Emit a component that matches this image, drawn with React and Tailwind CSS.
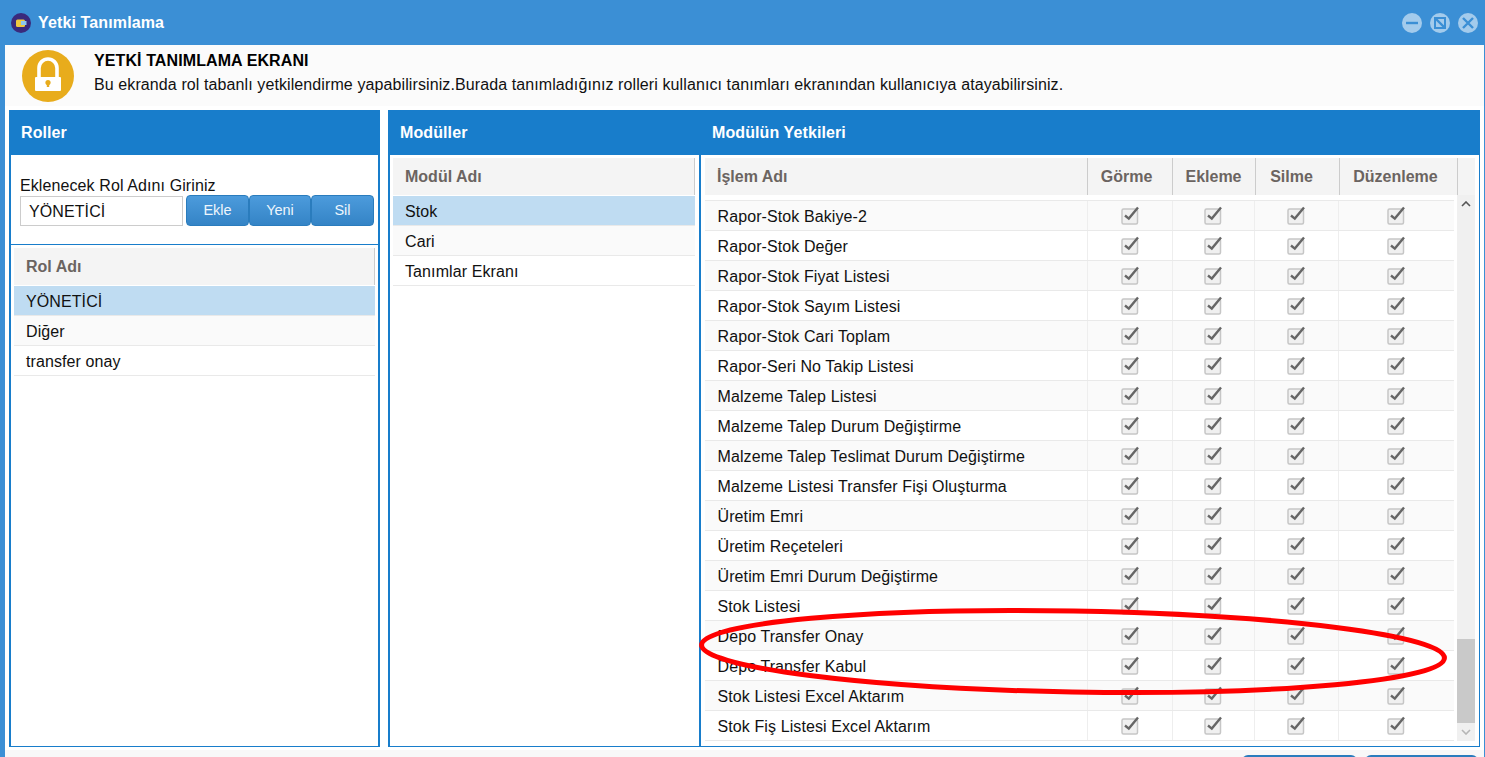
const permissions = [
  "Rapor-Stok Bakiye-2",
  "Rapor-Stok Değer",
  "Rapor-Stok Fiyat Listesi",
  "Rapor-Stok Sayım Listesi",
  "Rapor-Stok Cari Toplam",
  "Rapor-Seri No Takip Listesi",
  "Malzeme Talep Listesi",
  "Malzeme Talep Durum Değiştirme",
  "Malzeme Talep Teslimat Durum Değiştirme",
  "Malzeme Listesi Transfer Fişi Oluşturma",
  "Üretim Emri",
  "Üretim Reçeteleri",
  "Üretim Emri Durum Değiştirme",
  "Stok Listesi",
  "Depo Transfer Onay",
  "Depo Transfer Kabul",
  "Stok Listesi Excel Aktarım",
  "Stok Fiş Listesi Excel Aktarım",
];

const CheckBox = () => (
  <svg width="19" height="19" viewBox="0 0 19 19" className="block">
    <rect x="1" y="3" width="15.5" height="15" rx="1.5" fill="#f0f0f0" stroke="#c6c6c6" strokeWidth="1.5" />
    <path d="M4 9.5 L7.8 12.6 L17 1.5" fill="none" stroke="#666" strokeWidth="2.4" />
  </svg>
);

const WindowButton = ({ children }) => (
  <div className="flex h-5 w-5 items-center justify-center rounded-full bg-[#a3cbec]">
    <svg width="14" height="14" viewBox="0 0 14 14" fill="none" stroke="#3b8fd5" strokeWidth="2.4">
      {children}
    </svg>
  </div>
);

const PanelTitle = ({ children, className }) => (
  <div className={`flex h-[45px] shrink-0 items-center bg-[#187dcb] pl-3 text-[16px] font-bold tracking-[0.1px] text-white ${className}`}>
    {children}
  </div>
);

const HeadCell = ({ children, className }) => (
  <div className={`flex h-[37px] items-center bg-[#f4f4f4] text-[16px] font-bold text-[#6b6461] ${className}`}>
    {children}
  </div>
);

const ListRow = ({ label, selected, odd }) => (
  <div
    className={`flex h-[30px] items-center border-b border-[#e9e9e9] pl-3 pt-[2px] text-[16px] tracking-[0.1px] text-[#111] ${
      selected ? "bg-[#bfdcf2]" : odd ? "bg-[#fafafa]" : "bg-white"
    }`}
  >
    {label}
  </div>
);

const ActionButton = ({ children, className }) => (
  <button className={`h-[31px] rounded-[4px] border border-[#2a7cbd] bg-gradient-to-b from-[#4c9bdc] to-[#3484c6] text-[14.5px] text-[#eef6fc] ${className}`}>
    {children}
  </button>
);

export default function App() {
  return (
    <div className="relative flex h-[757px] w-[1485px] flex-col overflow-hidden bg-[#3b8fd5] font-['Liberation_Sans',Arial,sans-serif]">
      {/* title bar */}
      <div className="flex h-[45px] shrink-0 items-center justify-between pl-[11px] pr-[7px]">
        <div className="flex items-center gap-[7px]">
          <svg width="20" height="20" viewBox="0 0 20 20">
            <circle cx="10" cy="10" r="10" fill="#3a2a7c" />
            <rect x="5" y="6.5" width="9" height="7.5" rx="1.5" fill="#f0c93f" />
            <rect x="10" y="8" width="5.5" height="4" fill="#8ec9ee" />
          </svg>
          <span className="text-[16px] font-bold tracking-[0.13px] text-white">Yetki Tanımlama</span>
        </div>
        <div className="flex items-center gap-2">
          <WindowButton>
            <path d="M1 7 H13" />
          </WindowButton>
          <WindowButton>
            <rect x="2" y="2" width="10" height="10" strokeWidth="2" />
            <path d="M2 2 L12 12" />
          </WindowButton>
          <WindowButton>
            <path d="M2 2 L12 12 M12 2 L2 12" />
          </WindowButton>
        </div>
      </div>

      <div className="ml-[5px] mr-px flex min-h-0 flex-1 flex-col bg-white">
        {/* info header */}
        <div className="flex h-[61px] shrink-0 items-center bg-[#fbfbfb] pl-[16.5px]">
          <svg width="52" height="52" viewBox="0 0 52 52" className="shrink-0">
            <circle cx="26" cy="26" r="26" fill="#e8ac1c" />
            <path d="M17 28 V18 a9 9 0 0 1 18 0 V28" fill="none" stroke="#fff" strokeWidth="3.6" />
            <rect x="13" y="27" width="26" height="14" rx="1" fill="#fff" />
            <circle cx="26" cy="32.5" r="2.6" fill="#e8ac1c" />
            <rect x="24.8" y="33" width="2.4" height="4" fill="#e8ac1c" />
          </svg>
          <div className="ml-[20.5px] mb-[5px] text-[#111]">
            <div className="text-[16px] font-bold leading-[20px] tracking-[0.1px] text-black">YETKİ TANIMLAMA EKRANI</div>
            <div className="mt-[4px] text-[16px] leading-[20px] tracking-[0.1px]">
              Bu ekranda rol tabanlı yetkilendirme yapabilirsiniz.Burada tanımladığınız rolleri kullanıcı tanımları ekranından kullanıcıya atayabilirsiniz.
            </div>
          </div>
        </div>

        {/* panels */}
        <div className="flex h-[644px] shrink-0 gap-[8px] px-[4px] pb-[3px] pt-[4px]">
          {/* roles */}
          <div className="flex w-[371px] shrink-0 flex-col">
            <PanelTitle>Roller</PanelTitle>
            <div className="flex min-h-0 flex-1 flex-col border-x-2 border-b border-[#187dcb]">
              <div className="h-[90px] shrink-0 border-b border-[#187dcb] pl-[9px] pr-[4px] pt-[22px]">
                <div className="text-[16px] leading-[18px] tracking-[0.1px] text-[#111]">Eklenecek Rol Adını Giriniz</div>
                <div className="flex items-start">
                  <div className="mt-px flex h-[30px] w-[163px] items-center border border-[#ccc] pl-2 pt-[2px] text-[16px] tracking-[0.1px] text-[#111]">
                    YÖNETİCİ
                  </div>
                  <ActionButton className="ml-[3px] w-[63px]">Ekle</ActionButton>
                  <ActionButton className="w-[62px]">Yeni</ActionButton>
                  <ActionButton className="w-[63px]">Sil</ActionButton>
                </div>
              </div>
              <div className="px-[3px] pt-[3px]">
                <HeadCell className="border-r border-[#ccc] pl-3">Rol Adı</HeadCell>
                <div className="h-px" />
                <ListRow label="YÖNETİCİ" selected />
                <ListRow label="Diğer" odd />
                <ListRow label="transfer onay" />
              </div>
            </div>
          </div>

          {/* modules and permissions */}
          <div className="flex min-w-0 flex-1 flex-col">
            <div className="flex shrink-0">
              <PanelTitle className="w-[312px]">Modüller</PanelTitle>
              <PanelTitle className="flex-1">Modülün Yetkileri</PanelTitle>
            </div>
            <div className="flex min-h-0 flex-1 border-b border-l-2 border-r border-[#187dcb]">
              <div className="w-[311px] shrink-0 border-r-2 border-[#187dcb] pl-[3px] pr-[4px] pt-[3px]">
                <HeadCell className="border-r border-[#ccc] pl-3">Modül Adı</HeadCell>
                <div className="h-px" />
                <ListRow label="Stok" selected />
                <ListRow label="Cari" odd />
                <ListRow label="Tanımlar Ekranı" />
              </div>

              <div className="flex min-w-0 flex-1 flex-col pl-[4px] pt-[3px]">
                <div className="flex w-[770px] shrink-0">
                  <HeadCell className="w-[383px] shrink-0 border-r border-[#ccc] pl-3">İşlem Adı</HeadCell>
                  <HeadCell className="w-[85px] shrink-0 justify-center border-r border-[#ccc] pr-[7px]">Görme</HeadCell>
                  <HeadCell className="w-[83px] shrink-0 justify-center border-r border-[#ccc] pr-[1px]">Ekleme</HeadCell>
                  <HeadCell className="w-[84px] shrink-0 justify-center border-r border-[#ccc] pr-[12px]">Silme</HeadCell>
                  <HeadCell className="w-[118px] shrink-0 justify-center border-r border-[#ccc] pr-[6px]">Düzenleme</HeadCell>
                  <HeadCell className="w-[17px] shrink-0" />
                </div>
                <div className="flex min-h-0 flex-1">
                  <div className="w-[749px] shrink-0 pt-[5px]">
                    <div className="border-t border-[#e9e9e9]">
                      {permissions.map((name, i) => (
                        <div
                          key={name}
                          className={`flex h-[30px] items-center border-b border-[#e9e9e9] text-[16px] tracking-[0.1px] text-[#111] ${
                            i % 2 === 0 ? "bg-[#fafafa]" : "bg-white"
                          }`}
                        >
                          <div className="w-[382px] shrink-0 pl-[12.5px] pt-[2px]">{name}</div>
                          {["w-[85px]", "w-[82px]", "w-[84px]", "w-[116px]"].map((w) => (
                            <div key={w} className={`flex h-full shrink-0 items-center justify-center border-l border-[#eeeeee] ${w}`}>
                              <CheckBox />
                            </div>
                          ))}
                        </div>
                      ))}
                    </div>
                  </div>
                  {/* scrollbar */}
                  <div className="ml-[3px] flex h-[546px] w-[18px] shrink-0 flex-col bg-[#f0f0f0]">
                    <div className="flex h-[18px] items-center justify-center">
                      <svg width="10" height="6" viewBox="0 0 10 6" fill="none" stroke="#555" strokeWidth="1.6">
                        <path d="M1 5 L5 1 L9 5" />
                      </svg>
                    </div>
                    <div className="h-[426px]" />
                    <div className="h-[84px] bg-[#c9c9c9]" />
                    <div className="flex h-[18px] items-center justify-center">
                      <svg width="10" height="6" viewBox="0 0 10 6" fill="none" stroke="#b5b5b5" strokeWidth="1.6">
                        <path d="M1 1 L5 5 L9 1" />
                      </svg>
                    </div>
                  </div>
                </div>
              </div>
            </div>
          </div>
        </div>

        {/* footer */}
        <div className="flex min-h-0 flex-1 justify-end gap-2 bg-[#f8f8f8] pr-[6px] pt-[5px]">
          <div className="h-10 w-[115px] rounded-[6px] bg-[#2a7cbd]" />
          <div className="h-10 w-[113px] rounded-[6px] bg-[#2a7cbd]" />
        </div>
      </div>

      {/* hand-drawn annotation */}
      <svg className="pointer-events-none absolute left-0 top-0" width="1485" height="757" viewBox="0 0 1485 757" fill="none">
        <ellipse cx="1073" cy="651.5" rx="371.5" ry="40.5" transform="rotate(1 1073 651.5)" stroke="#ff0000" strokeWidth="5" />
      </svg>
    </div>
  );
}
